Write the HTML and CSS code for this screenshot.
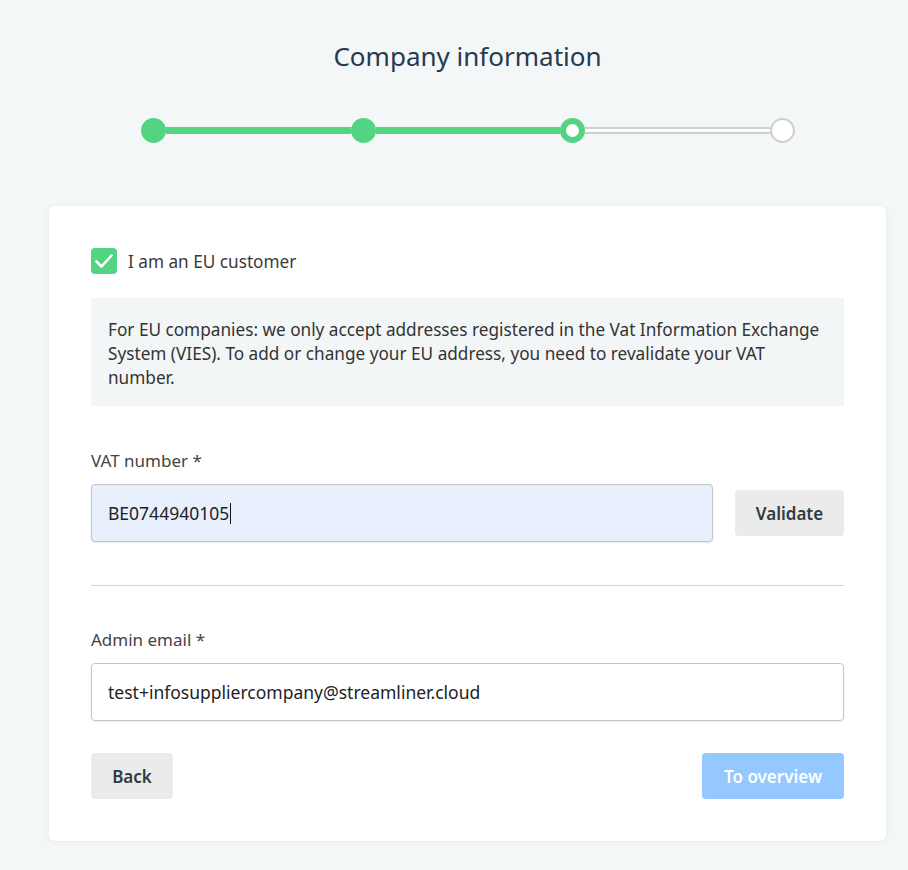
FILE: index.html
```html
<!DOCTYPE html>
<html lang="en">
<head>
    <meta charset="UTF-8">
    <meta name="viewport" content="width=device-width, initial-scale=1.0">
    <title>Company information</title>
    <link rel="stylesheet" href="styles.css">
</head>
<body>
    <div class="page">
        <h1>Company information</h1>

        <div class="stepper">
            <span class="dot done"></span>
            <span class="bar done"></span>
            <span class="dot done"></span>
            <span class="bar done"></span>
            <span class="dot current"></span>
            <span class="bar"></span>
            <span class="dot"></span>
        </div>

        <div class="card">
            <label class="check">
                <span class="box">
                    <svg width="26" height="26" viewBox="0 0 26 26"><path d="M5.5 13.5l5 5 10-11" fill="none" stroke="#fff" stroke-width="2.6" stroke-linecap="round" stroke-linejoin="round"/></svg>
                </span>
                I am an EU customer
            </label>

            <div class="notice">
                For EU companies: we only accept addresses registered in the Vat Information Exchange System (VIES). To add or change your EU address, you need to revalidate your VAT number.
            </div>

            <div class="field">
                <div class="label">VAT number *</div>
                <div class="row">
                    <div class="input autofill">BE0744940105<span class="caret"></span></div>
                    <button class="btn grey">Validate</button>
                </div>
            </div>

            <hr class="divider">

            <div class="field">
                <div class="label">Admin email *</div>
                <div class="input">test+infosuppliercompany@streamliner.cloud</div>
            </div>

            <div class="actions">
                <button class="btn grey">Back</button>
                <button class="btn primary" disabled>To overview</button>
            </div>
        </div>
    </div>
</body>
</html>
```

FILE: styles.css
```css
body {
    font-family: "Noto Sans", Lato, sans-serif;
    background-color: #f3f7f8;
    margin: 0;
    color: #333;
}
.page {
    padding: 38px 22px 28px 49px;
}
h1 {
    font-weight: 400;
    font-size: 26px;
    color: #263a4d;
    text-align: center;
    margin: 0;
    line-height: 36px;
}
.stepper {
    display: flex;
    align-items: center;
    width: 654px;
    margin: 44px 0 0 92px;
}
.dot {
    width: 25px;
    height: 25px;
    border-radius: 50%;
    box-sizing: border-box;
    border: 2px solid #cfcfcf;
    background: #fff;
    flex: none;
}
.dot.done {
    background: #52d482;
    border-color: #52d482;
}
.dot.current {
    border: 6px solid #52d482;
    background: #fff;
}
.bar {
    flex: 1;
    height: 7px;
    box-sizing: border-box;
    background: #fff;
    border-top: 2px solid #cfcfcf;
    border-bottom: 2px solid #cfcfcf;
}
.bar.done {
    background: #52d482;
    border: none;
}
.card {
    background: #fff;
    border-radius: 6px;
    box-shadow: 0 1px 6px rgba(0, 0, 0, 0.06);
    margin-top: 63px;
    padding: 42px 42px 42px 42px;
}
.check {
    display: flex;
    align-items: center;
    gap: 11px;
    font-size: 17.2px;
    color: #3a3a3a;
}
.box {
    width: 26px;
    height: 26px;
    border-radius: 4px;
    background: #52d482;
    display: flex;
    align-items: center;
    justify-content: center;
}
.notice {
    background: #f3f6f7;
    margin-top: 24px;
    padding: 20px 20px 16px 17px;
    font-size: 17.2px;
    line-height: 24px;
    color: #333;
}
.field {
    margin-top: 43px;
}
.label {
    font-size: 17px;
    color: #444;
    line-height: 24px;
    margin-bottom: 11px;
}
.row {
    display: flex;
    align-items: center;
    gap: 22px;
}
.input {
    flex: 1;
    height: 58px;
    box-sizing: border-box;
    border: 1px solid #c4c4c4;
    border-radius: 4px;
    padding: 0 16px;
    display: flex;
    align-items: center;
    font-size: 17.5px;
    color: #222;
    box-shadow: 0 1px 2px rgba(0, 0, 0, 0.08);
}
.input.autofill {
    background: #e8f0fe;
}
.caret {
    display: inline-block;
    width: 1px;
    height: 21px;
    background: #111;
    margin-left: 1px;
}
.btn {
    font-family: "Noto Sans", Lato, sans-serif;
    font-size: 17px;
    font-weight: 600;
    border: none;
    border-radius: 4px;
    height: 46px;
    padding: 0;
    cursor: pointer;
}
.btn.grey {
    background: #ebebeb;
    color: #2f3b45;
}
.row .btn {
    width: 109px;
}
.btn.primary {
    background: #94c8fe;
    color: #fff;
    width: 142px;
}
.divider {
    border: none;
    border-top: 1px solid #d4d4d4;
    margin: 43px 0 0 0;
}
.divider + .field {
    margin-top: 42px;
}
.actions {
    display: flex;
    justify-content: space-between;
    margin-top: 32px;
}
.actions .btn.grey {
    width: 82px;
}
```
